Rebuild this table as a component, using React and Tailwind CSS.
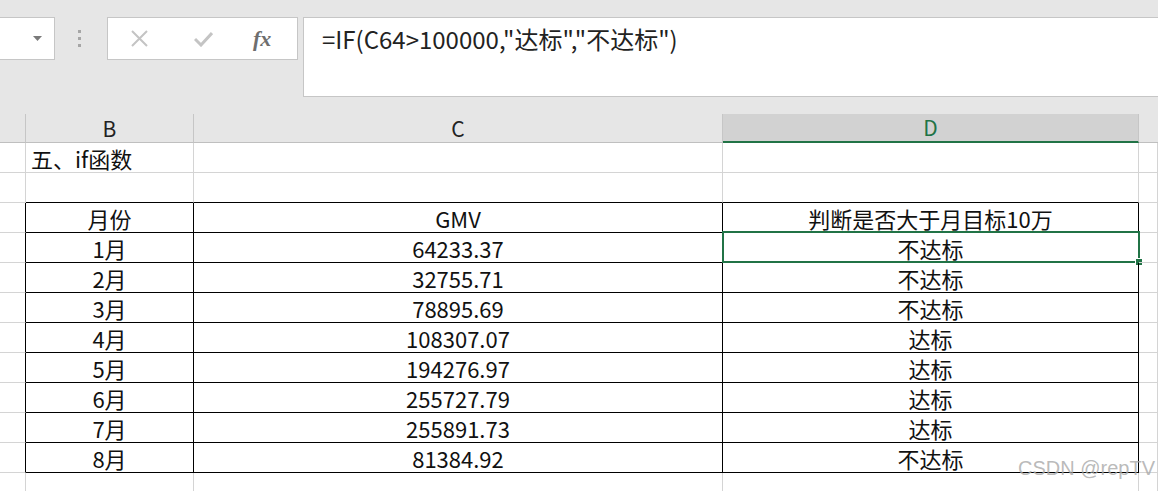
import React from 'react';

const font = { fontFamily: '"Noto Sans CJK SC", "Noto Sans", sans-serif' };

const data = [
  ['1月', '64233.37', '不达标'],
  ['2月', '32755.71', '不达标'],
  ['3月', '78895.69', '不达标'],
  ['4月', '108307.07', '达标'],
  ['5月', '194276.97', '达标'],
  ['6月', '255727.79', '达标'],
  ['7月', '255891.73', '达标'],
  ['8月', '81384.92', '不达标'],
];

// rows: 0 = title, 1 = blank, 2 = table head, 3..10 = data, 11 = partial
const rows = [
  ['', '五、if函数', '', '', ''],
  ['', '', '', '', ''],
  ['', '月份', 'GMV', '判断是否大于月目标10万', ''],
  ...data.map(d => ['', ...d, '']),
  ['', '', '', '', ''],
];

const widths = ['w-[26px]', 'w-[168px]', 'w-[529px]', 'w-[416px]', 'flex-1'];

function cellBorder(r, c) {
  const inTable = r >= 2 && r <= 10;
  const right = inTable && c <= 3 ? 'border-r-black' : 'border-r-[#d4d4d4]';
  const bottom = r >= 1 && r <= 10 && c >= 1 && c <= 3 ? 'border-b-black' : 'border-b-[#d4d4d4]';
  return `${right} ${bottom}`;
}

function Toolbar() {
  return (
    <div className="h-[114px] relative flex items-start pt-[17px]">
      {/* name box */}
      <div className="w-[55px] h-[43px] bg-white border border-l-0 border-[#c6c6c6] flex items-center justify-end pr-[12px]">
        <svg width="9" height="5" viewBox="0 0 9 5"><path d="M0 0h9L4.5 5z" fill="#7a7a7a" /></svg>
      </div>
      {/* dots */}
      <div className="ml-[23px] mt-[13px] flex flex-col gap-[4px]">
        <div className="w-[3px] h-[3px] bg-[#a6a6a6]" />
        <div className="w-[3px] h-[3px] bg-[#a6a6a6]" />
        <div className="w-[3px] h-[3px] bg-[#a6a6a6]" />
      </div>
      {/* cancel / enter / fx */}
      <div className="ml-[26px] w-[191px] h-[43px] bg-white border border-[#c6c6c6] flex items-center">
        <svg className="ml-[23px]" width="17" height="17" viewBox="0 0 17 17">
          <path d="M1 1L16 16M16 1L1 16" stroke="#c4c4c4" strokeWidth="2" />
        </svg>
        <svg className="ml-[46px]" width="19" height="16" viewBox="0 0 19 16">
          <path d="M1 8l6 6L18 2" stroke="#c4c4c4" strokeWidth="3" fill="none" />
        </svg>
        <span className="ml-[40px] text-[22px] italic font-bold text-[#6e6e6e] leading-none" style={{ fontFamily: '"Liberation Serif", serif' }}>fx</span>
      </div>
      {/* formula bar */}
      <div className="ml-[5px] flex-1 h-[80px] bg-white border border-r-0 border-[#c6c6c6] pl-[18px] pt-[3px] text-[24px] leading-[36px] text-[#222]">
        =IF(C64&gt;100000,"达标","不达标")
      </div>
    </div>
  );
}

function ColumnHeaders() {
  const labels = ['', 'B', 'C', 'D', ''];
  return (
    <div className="flex h-[29px] text-[21px] leading-none">
      {labels.map((l, i) =>
        i === 3 ? (
          <div key={i} className={`${widths[i]} bg-[#d2d2d2] border-r border-r-[#c6c6c6] border-b-2 border-b-[#217346] text-[#217346] flex items-center justify-center`}>
            {l}
          </div>
        ) : (
          <div key={i} className={`${widths[i]} bg-[#e6e6e6] ${i < 4 ? 'border-r border-r-[#c6c6c6]' : ''} border-b border-b-[#bfbfbf] text-[#222] flex items-center justify-center`}>
            {l}
          </div>
        )
      )}
    </div>
  );
}

export default function App() {
  return (
    <div className="w-[1158px] h-[491px] bg-[#e6e6e6] overflow-hidden relative" style={font}>
      <Toolbar />
      <ColumnHeaders />
      <div className="bg-white">
        {rows.map((row, r) => (
          <div key={r} className="flex h-[30px] text-[22px] text-[#111] leading-none">
            {row.map((v, c) => (
              <div
                key={c}
                className={`${widths[c]} relative border-r border-b ${cellBorder(r, c)} flex items-center ${r === 0 ? 'justify-start pl-[5px]' : 'justify-center'}`}
              >
                {v}
                {r === 3 && c === 3 && (
                  <>
                    <div className="absolute -top-[2px] -left-[1px] -right-[2px] -bottom-[1px] border-2 border-[#217346]" />
                    <div className="absolute -bottom-[4px] -right-[5px] w-[8px] h-[8px] bg-[#217346] border border-white" />
                  </>
                )}
              </div>
            ))}
          </div>
        ))}
      </div>
      <div className="absolute right-[3px] bottom-[8px] text-[20px] text-[#a8a8a8]/80" style={{ fontFamily: '"Liberation Sans", sans-serif' }}>
        CSDN @repTV
      </div>
    </div>
  );
}
